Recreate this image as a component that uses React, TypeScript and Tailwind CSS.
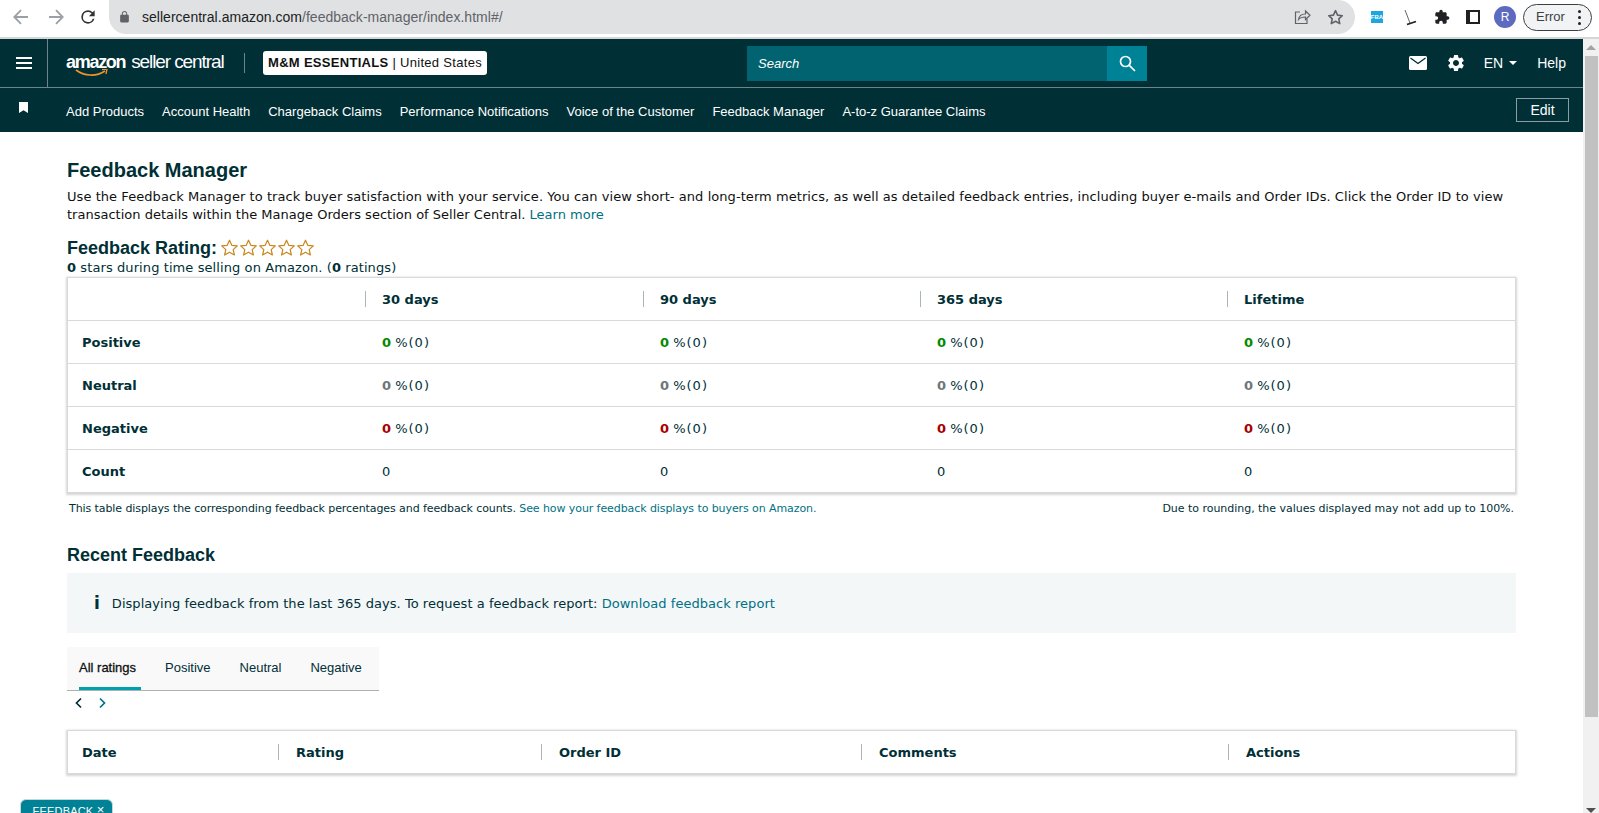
import React from 'react';

const sans = 'font-["Liberation_Sans",Arial,sans-serif]';
const verdana = 'font-["DejaVu_Sans",Verdana,sans-serif]';

const overviewCols = ['30 days', '90 days', '365 days', 'Lifetime'];
const overviewRows = [
  { label: 'Positive', color: 'text-[#008a00]' },
  { label: 'Neutral', color: 'text-[#6c7778]' },
  { label: 'Negative', color: 'text-[#a80000]' },
];
const recentCols = ['Rating', 'Order ID', 'Comments', 'Actions'];
const navLinks = [
  'Add Products',
  'Account Health',
  'Chargeback Claims',
  'Performance Notifications',
  'Voice of the Customer',
  'Feedback Manager',
  'A-to-z Guarantee Claims',
];

function Star() {
  return (
    <svg width="19" height="17" viewBox="0 0 19 17" aria-hidden="true">
      <path d="M9.500 1.200l2.300 5.100 5.500.6-4.100 3.700 1.200 5.400-4.900-2.800L4.600 16l1.200-5.400L1.700 6.900l5.500-.6z" fill="#fff" stroke="#c8861c" strokeWidth="1.200" strokeLinejoin="round" />
    </svg>
  );
}

function BrowserBar() {
  return (
    <div className={`flex h-[39px] items-start border-b-2 border-[#d4d6d8] bg-white ${sans}`}>
      <div className="flex h-[34px] w-[109px] items-center pl-[12px]">
        <svg width="18" height="18" viewBox="0 0 18 18" fill="none" stroke="#9aa0a6" strokeWidth="1.800" aria-hidden="true"><path d="M16 9H2.500M9 2.200L2.300 9 9 15.800" /></svg>
        <svg width="18" height="18" viewBox="0 0 18 18" fill="none" stroke="#9aa0a6" strokeWidth="1.800" className="ml-[17px]" aria-hidden="true"><path d="M2 9h13.500M9 2.200L15.700 9 9 15.800" /></svg>
        <svg width="20" height="20" viewBox="0 0 24 24" fill="#333" className="ml-[13px]" aria-hidden="true"><path d="M17.650 6.350A7.960 7.960 0 0 0 12 4a8 8 0 1 0 7.730 10h-2.080A6 6 0 1 1 12 6c1.660 0 3.140.69 4.220 1.780L13 11h7V4l-2.350 2.350z" /></svg>
      </div>
      <div className="flex h-[34px] w-[1246px] items-center rounded-r-[17px] rounded-bl-[17px] bg-[#dfe1e3]">
        <svg width="13" height="14" viewBox="0 0 24 24" fill="#5f6368" className="ml-[9px]" aria-hidden="true"><path d="M18 8h-1V6c0-2.760-2.240-5-5-5S7 3.240 7 6v2H6c-1.100 0-2 .9-2 2v10c0 1.100.9 2 2 2h12c1.100 0 2-.9 2-2V10c0-1.100-.9-2-2-2zm-2.900 0H8.900V6c0-1.710 1.390-3.100 3.100-3.100 1.710 0 3.100 1.390 3.100 3.100v2z" /></svg>
        <span className="ml-[11px] text-[14px] tracking-[0.02px] text-[#202124]">
          sellercentral.amazon.com<span className="text-[#5f6368]">/feedback-manager/index.html#/</span>
        </span>
        <div className="ml-auto flex items-center gap-[16px] pr-[11px]">
          <svg width="17" height="16" viewBox="0 0 17 16" fill="none" stroke="#5f6368" strokeWidth="1.200" aria-hidden="true"><path d="M6 3H1.500v11.500H13V10" /><path d="M4.500 10.500c.5-3.500 3.500-5.500 7-5.500V2l4.500 4.300-4.500 4.200V8c-3 0-5.500.6-7 2.500z" /></svg>
          <svg width="17" height="16" viewBox="0 0 18 17" fill="none" stroke="#5f6368" strokeWidth="1.700" aria-hidden="true"><path d="M9 1.800l2.200 4.700 5 .6-3.700 3.400 1 5L9 13l-4.500 2.500 1-5L1.800 7.100l5-.6z" strokeLinejoin="round" /></svg>
        </div>
      </div>
      <div className="flex h-[34px] flex-1 items-center">
        <div className="ml-[16px] flex h-[12px] w-[12px] flex-col items-center justify-center bg-[#1ca7e0] text-[6px] leading-none font-bold text-white">FBA</div>
        <svg width="13" height="17" viewBox="0 0 13 17" fill="none" stroke="#222" className="ml-[21px]" aria-hidden="true"><path d="M1 1l5 13" strokeWidth="0.700" /><path d="M3 15.500l9-3" strokeWidth="1.800" /></svg>
        <svg width="16" height="16" viewBox="0 0 24 24" fill="#202124" className="ml-[17px]" aria-hidden="true"><path d="M20.500 11H19V7c0-1.100-.9-2-2-2h-4V3.500C13 2.120 11.880 1 10.500 1S8 2.120 8 3.500V5H4c-1.100 0-1.990.9-1.990 2v3.800H3.500c1.490 0 2.700 1.210 2.700 2.700s-1.210 2.700-2.700 2.700H2V20c0 1.100.9 2 2 2h3.800v-1.500c0-1.490 1.210-2.700 2.700-2.700 1.490 0 2.700 1.210 2.700 2.700V22H17c1.100 0 2-.9 2-2v-4h1.500c1.380 0 2.500-1.120 2.500-2.500S21.880 11 20.500 11z" /></svg>
        <div className="ml-[16px] flex h-[14px] w-[14px] justify-end border-2 border-[#202124] bg-[#202124]"><div className="h-full w-[8px] bg-white" /></div>
        <div className="ml-[14px] flex h-[22px] w-[22px] items-center justify-center rounded-full bg-[#5c6bc0] text-[12px] text-white">R</div>
        <div className="ml-[7px] flex h-[27px] w-[69px] items-center rounded-full border border-[#3c4043] bg-[#f1f3f4] pl-[12px] text-[13px] text-[#3c4043]">
          Error
          <div className="mr-[10px] ml-auto flex flex-col gap-[3px]">
            <span className="h-[3px] w-[3px] rounded-full bg-[#202124]" />
            <span className="h-[3px] w-[3px] rounded-full bg-[#202124]" />
            <span className="h-[3px] w-[3px] rounded-full bg-[#202124]" />
          </div>
        </div>
      </div>
    </div>
  );
}

function SellerHeader() {
  return (
    <header className={`bg-[#002f36] text-white ${sans}`}>
      <div className="relative flex h-[49px] items-center border-b border-[#6f8488]">
        <div className="flex h-full w-[48px] items-center justify-center border-r border-[#6f8488]">
          <svg width="16" height="12" viewBox="0 0 16 12" fill="#fff" aria-hidden="true"><path d="M0 0h16v2H0zM0 5h16v2H0zM0 10h16v2H0z" /></svg>
        </div>
        <div className="relative ml-[18px] w-[160px] -translate-y-[2px] leading-none whitespace-nowrap">
          <span className="text-[18px] font-bold tracking-[-1.3px]">amazon</span>
          <span className="ml-[6px] text-[19px] font-normal tracking-[-1.1px]">seller central</span>
          <svg width="34" height="9" viewBox="0 0 34 9" className="absolute top-[17px] left-[9px]" aria-hidden="true">
            <path d="M1 1c8 6 20 7 29 1" fill="none" stroke="#f0932b" strokeWidth="1.700" />
            <path d="M27 .5l5-.5-1 5" fill="none" stroke="#f0932b" strokeWidth="1.300" />
          </svg>
        </div>
        <div className="ml-[18px] h-[20px] w-px bg-[#6f8488]" />
        <div className="ml-[18px] flex h-[24px] w-[224px] items-center justify-center rounded-[3px] bg-white text-[13px] tracking-[0.3px] whitespace-nowrap text-[#111]">
          <span className="font-bold">M&amp;M ESSENTIALS</span>&nbsp;| United States
        </div>
        <div className="ml-[260px] flex h-[35px] w-[400px]">
          <div className="flex flex-1 items-center bg-[#00636f] pt-[1px] pl-[11px] text-[13px] text-white italic">Search</div>
          <div className="flex w-[40px] items-center justify-center bg-[#008296]">
            <svg width="17" height="17" viewBox="0 0 17 17" fill="none" stroke="#fff" strokeWidth="1.700" aria-hidden="true"><circle cx="6.500" cy="6.500" r="5" /><path d="M10.300 10.300l5.700 5.700" /></svg>
          </div>
        </div>
        <div className="ml-auto flex items-center pr-[17px]">
          <svg width="18" height="14" viewBox="0 0 18 14" aria-hidden="true"><rect width="18" height="14" rx="1.500" fill="#fff" /><path d="M1.500 2L9 7.500 16.500 2" fill="none" stroke="#002f36" strokeWidth="1.400" /></svg>
          <svg width="20" height="20" viewBox="0 0 24 24" fill="#fff" className="ml-[19px]" aria-hidden="true"><path d="M19.140 12.940c.04-.3.06-.61.06-.94 0-.32-.02-.64-.07-.94l2.030-1.580c.18-.14.23-.41.12-.61l-1.920-3.320c-.12-.22-.37-.29-.59-.22l-2.390.96c-.5-.38-1.030-.7-1.620-.94l-.36-2.540c-.04-.24-.24-.41-.48-.41h-3.840c-.24 0-.43.17-.47.41l-.36 2.540c-.59.24-1.130.57-1.620.94l-2.390-.96c-.22-.08-.47 0-.59.22L2.740 8.870c-.12.21-.08.47.12.61l2.030 1.580c-.05.3-.09.63-.09.94s.02.64.07.94l-2.030 1.580c-.18.14-.23.41-.12.61l1.920 3.320c.12.22.37.29.59.22l2.390-.96c.5.38 1.030.7 1.620.94l.36 2.540c.05.24.24.41.48.41h3.840c.24 0 .44-.17.47-.41l.36-2.540c.59-.24 1.130-.56 1.620-.94l2.390.96c.22.08.47 0 .59-.22l1.920-3.320c.12-.22.07-.47-.12-.61l-2.010-1.580zM12 15.600c-1.980 0-3.600-1.620-3.600-3.600s1.620-3.600 3.600-3.600 3.600 1.620 3.600 3.600-1.620 3.600-3.600 3.600z" /></svg>
          <span className="ml-[18px] text-[14px]">EN</span>
          <span className="ml-[6px] h-0 w-0 border-x-[4px] border-t-[4px] border-x-transparent border-t-white" />
          <span className="ml-[20px] text-[14px]">Help</span>
        </div>
      </div>
      <div className="flex h-[44px] items-center">
        <svg width="9" height="11" viewBox="0 0 10 12" fill="#fff" className="mb-[5px] ml-[19px]" aria-hidden="true"><path d="M0 0h10v12L5 9l-5 3z" /></svg>
        <nav className="ml-[38px] flex gap-[18px] pt-[3px] text-[13px] whitespace-nowrap">
          {navLinks.map((link) => (
            <span key={link}>{link}</span>
          ))}
        </nav>
        <div className="mr-[14px] ml-auto flex h-[24px] w-[53px] items-center justify-center border border-[#8a9ea1] text-[14px]">Edit</div>
      </div>
    </header>
  );
}

function OverviewTable() {
  const grid = 'grid grid-cols-[297px_278px_277px_307px_1fr]';
  return (
    <div className="border border-[#d5dbdb] bg-white text-[13px] shadow-[0_1px_2px_1px_rgba(0,0,0,0.16)]">
      <div className={`${grid} h-[43px] items-center border-b border-[#d5dbdb] font-bold`}>
        <div />
        {overviewCols.map((col) => (
          <div key={col} className="flex h-[16px] items-center border-l border-[#a9b5b7] pt-[2px] pl-[16px]">{col}</div>
        ))}
      </div>
      {overviewRows.map((row) => (
        <div key={row.label} className={`${grid} h-[43px] items-center border-b border-[#d5dbdb] pt-[2px]`}>
          <div className="pl-[14px] font-bold">{row.label}</div>
          {overviewCols.map((col) => (
            <div key={col} className="pl-[17px] whitespace-pre">
              <span className={`font-bold ${row.color}`}>0</span> <span className="tracking-[1px]">%(0)</span>
            </div>
          ))}
        </div>
      ))}
      <div className={`${grid} h-[42px] items-center pt-[2px]`}>
        <div className="pl-[14px] font-bold">Count</div>
        {overviewCols.map((col) => (
          <div key={col} className="pl-[17px]">0</div>
        ))}
      </div>
    </div>
  );
}

function RecentTable() {
  return (
    <div className="mt-[20px] grid h-[44px] grid-cols-[210px_263px_320px_367px_1fr] items-center border border-[#d5dbdb] bg-white text-[13px] font-bold shadow-[0_1px_2px_1px_rgba(0,0,0,0.16)]">
      <div className="pt-[2px] pl-[14px]">Date</div>
      {recentCols.map((col) => (
        <div key={col} className="flex h-[16px] items-center border-l border-[#a9b5b7] pt-[2px] pl-[17px]">{col}</div>
      ))}
    </div>
  );
}

export default function App() {
  return (
    <div className="relative h-[813px] overflow-hidden bg-white">
      <BrowserBar />
      <div className="flex h-[774px]">
        <div className="w-[1583px] shrink-0">
          <SellerHeader />
          <main className={`px-[67px] pt-[25px] text-[#002f36] ${verdana}`}>
            <h1 className={`text-[20px] leading-[26px] font-bold ${sans}`}>Feedback Manager</h1>
            <p className="mt-[5px] text-[13px] leading-[18px] text-[#0f1111]">
              <span className="block tracking-[0.06px] whitespace-nowrap">Use the Feedback Manager to track buyer satisfaction with your service. You can view short- and long-term metrics, as well as detailed feedback entries, including buyer e-mails and Order IDs. Click the Order ID to view</span>
              <span className="block tracking-[0.01px] whitespace-nowrap">transaction details within the Manage Orders section of Seller Central. <span className="text-[#007185]">Learn more</span></span>
            </p>
            <div className="mt-[13px] flex h-[23px] items-center">
              <h2 className={`text-[18px] font-bold ${sans}`}>Feedback Rating:</h2>
              <div className="ml-[3px] flex -translate-y-[1px]">
                <Star /><Star /><Star /><Star /><Star />
              </div>
            </div>
            <p className="mb-[1px] text-[13px] leading-[16px] tracking-[0.09px]">
              <b>0</b> stars during time selling on Amazon. (<b>0</b> ratings)
            </p>
            <OverviewTable />
            <div className="mt-[8px] flex justify-between px-[2px] text-[11px] leading-[16px]">
              <span className="tracking-[-0.085px]">This table displays the corresponding feedback percentages and feedback counts. <span className="text-[#007185]">See how your feedback displays to buyers on Amazon.</span></span>
              <span className="tracking-[-0.03px]">Due to rounding, the values displayed may not add up to 100%.</span>
            </div>
            <h2 className={`mt-[26px] text-[18px] leading-[24px] font-bold ${sans}`}>Recent Feedback</h2>
            <div className="mt-[6px] flex h-[60px] items-center bg-[#f4f7f8] pl-[27px] text-[13px]">
              <span className="text-[17px] leading-none font-bold text-[#002f36]">i</span>
              <span className="ml-[12px] pt-[2px] tracking-[0.04px]">Displaying feedback from the last 365 days. To request a feedback report: <span className="text-[#007185]">Download feedback report</span></span>
            </div>
            <div className={`mt-[14px] flex h-[44px] w-[312px] items-stretch border-b border-[#aab0b3] bg-[#f9f9f9] pl-[12px] text-[13px] ${sans}`}>
              <div className="flex w-[62px] items-center border-b-[3px] border-[#00a0ac] pt-[1px] text-[#0f1111] [-webkit-text-stroke:0.3px]">All ratings</div>
              <div className="ml-[24px] flex items-center pb-[2px]">Positive</div>
              <div className="ml-[29px] flex items-center pb-[2px]">Neutral</div>
              <div className="ml-[29px] flex items-center pb-[2px]">Negative</div>
            </div>
            <div className="mt-[5px] flex h-[14px] items-center gap-[15px] pl-[7px]">
              <svg width="9" height="12" viewBox="0 0 9 12" fill="none" stroke="#002f36" strokeWidth="1.700" aria-hidden="true"><path d="M7 1.500L2.500 6 7 10.500" /></svg>
              <svg width="9" height="12" viewBox="0 0 9 12" fill="none" stroke="#007185" strokeWidth="1.700" aria-hidden="true"><path d="M2 1.500L6.500 6 2 10.500" /></svg>
            </div>
            <RecentTable />
          </main>
        </div>
        <div className="flex flex-1 flex-col items-center bg-[#f1f1f1]">
          <div className="mt-[6px] h-0 w-0 border-x-[5px] border-b-[5px] border-x-transparent border-b-[#a3a3a3]" />
          <div className="mt-[6px] h-[661px] w-[13px] bg-[#c1c1c1]" />
          <div className="mt-auto h-0 w-0 border-x-[5px] border-t-[5px] border-x-transparent border-t-[#505050]" />
        </div>
      </div>
      <div className={`absolute top-[799px] left-[20px] flex h-[24px] w-[93px] items-start justify-center rounded-t-[6px] border border-[#c7d6d8] bg-[#008296] pt-[3px] pl-[4px] text-[11px] tracking-[0.2px] text-white ${sans}`}>
        FEEDBACK&nbsp;<span className="text-[13px] leading-[13px]">×</span>
      </div>
    </div>
  );
}
